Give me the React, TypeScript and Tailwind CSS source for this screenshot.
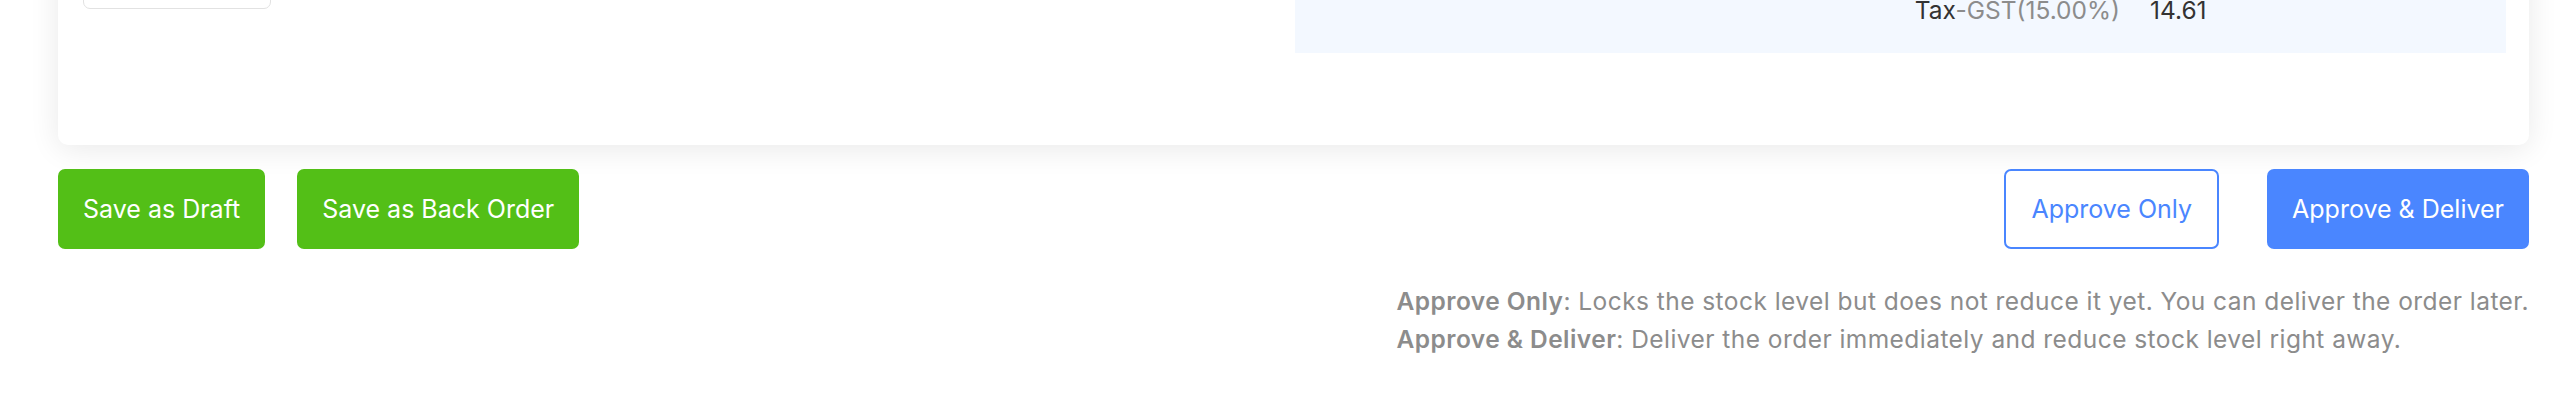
const SaveButton = ({ label }: { label: string }) => (
	<button className="h-[80px] px-[25px] rounded-[7px] bg-[#53bf17] text-white text-[25px] leading-none">
		{label}
	</button>
)

const App = () => {
	return (
		<div className="w-full h-[412px] bg-white overflow-hidden font-['Inter',sans-serif]">
			<div className="pl-[58px] pr-[31px]">
				{/* order card, its top is scrolled out of view */}
				<div className="-mt-[40px] h-[185px] bg-white rounded-[10px] shadow-[0_4px_30px_rgba(0,0,0,0.09)] flex justify-between items-start pl-[25px] pr-[23px]">
					<div className="w-[188px] h-[49px] border-[1.5px] border-[#e2e2e2] rounded-[7px] bg-white" />
					<div className="w-[1211px] h-[93px] bg-[#f3f8ff] pt-[34px]">
						<div className="flex items-center h-[32px] gap-[30px] text-[24.5px]">
							<div className="flex-1 text-right">
								<span className="text-[#333]">Tax</span>
								<span className="text-[#8c8c8c]">-GST(15.00%)</span>
							</div>
							<div className="w-[356px] text-[#333]">14.61</div>
						</div>
					</div>
				</div>

				<div className="flex justify-between mt-[24px]">
					<div className="flex gap-[32px]">
						<SaveButton label="Save as Draft" />
						<SaveButton label="Save as Back Order" />
					</div>
					<div className="flex gap-[48px]">
						<button className="h-[80px] px-[25px] rounded-[7px] border-[2px] border-[#4a86ff] bg-white text-[#4a86ff] text-[25px] leading-none">
							Approve Only
						</button>
						<button className="h-[80px] px-[25px] rounded-[7px] bg-[#4a86ff] text-white text-[25px] leading-none">
							Approve &amp; Deliver
						</button>
					</div>
				</div>

				<div className="flex justify-end mt-[33px]">
					<div className="text-[24.5px] leading-[38px] tracking-[0.45px] text-[#8c8c8c]">
						<div><span className="font-semibold">Approve Only</span>: Locks the stock level but does not reduce it yet. You can deliver the order later.</div>
						<div><span className="font-semibold">Approve &amp; Deliver</span>: Deliver the order immediately and reduce stock level right away.</div>
					</div>
				</div>
			</div>
		</div>
	)
}

export default App
